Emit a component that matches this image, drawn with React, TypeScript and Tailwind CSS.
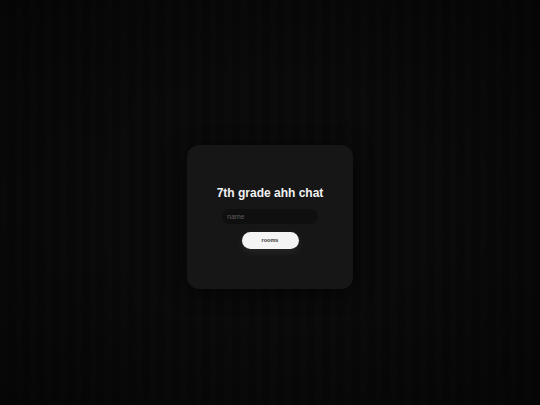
import React from "react";

export default function App() {
  return (
    <div
      className="relative min-h-screen w-full flex items-center justify-center pt-[31px] bg-[#090909] bg-[repeating-linear-gradient(90deg,rgba(255,255,255,0.006)_0px,rgba(255,255,255,0.006)_7px,rgba(0,0,0,0)_7px,rgba(0,0,0,0)_15px)]"
      style={{ fontFamily: '"Liberation Sans", Arial, sans-serif' }}
    >
      <div className="pointer-events-none absolute inset-0 bg-[radial-gradient(ellipse_at_center,rgba(0,0,0,0)_40%,rgba(0,0,0,0.45)_100%)]" />
      <div className="relative w-[166px] h-[144px] rounded-[12px] bg-[#161616] shadow-[0_4px_20px_rgba(0,0,0,0.6)] flex flex-col items-center justify-center mt-[-2px]">
        <h1 className="text-[12px] leading-[14px] font-bold text-[#f2f2f2]">
          7th grade ahh chat
        </h1>
        <input
          placeholder="name"
          className="mt-[9px] w-[96px] h-[15px] rounded-full bg-[#0f0f0f] px-[5px] text-[7px] text-white placeholder:text-[#5e5e5e] outline-none"
        />
        <button className="mt-[8px] w-[57px] h-[17px] rounded-full bg-[#f4f4f4] text-[5.5px] font-bold text-[#333] shadow-[0_3px_8px_rgba(255,255,255,0.08)]">
          rooms
        </button>
      </div>
    </div>
  );
}
